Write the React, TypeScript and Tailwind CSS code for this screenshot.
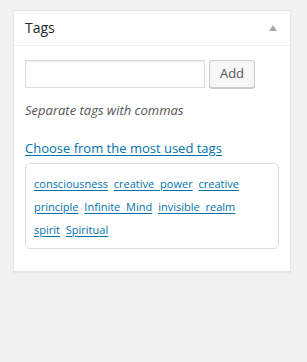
import React from "react";

const tags = [
  "consciousness",
  "creative power",
  "creative principle",
  "Infinite Mind",
  "invisible realm",
  "spirit",
  "Spiritual",
];

export default function App() {
  return (
    <div
      className="min-h-[362px] w-[307px] bg-[#f1f1f1] pt-[10px] pl-[13px]"
      style={{ fontFamily: '"Open Sans", "Noto Sans", sans-serif' }}
    >
      <div className="w-[278px] border border-[#e5e5e5] bg-white shadow-[0_1px_1px_rgba(0,0,0,0.04)]">
        <div className="flex h-[35px] items-center justify-between border-b border-[#eeeeee] pl-[11px] pr-[13px]">
          <span className="text-[14px] leading-none text-[#23282d]">Tags</span>
          <svg width="8" height="6" viewBox="0 0 8 6" className="mb-[1px]">
            <polygon points="4,0 8,6 0,6" fill="#aaaaaa" />
          </svg>
        </div>
        <div className="px-[11px] pt-[14px] pb-[22px]">
          <div className="flex items-center gap-[4px]">
            <div className="h-[28px] w-[180px] border border-[#dddddd] bg-white shadow-[inset_0_1px_2px_rgba(0,0,0,0.07)]" />
            <button className="flex h-[28px] w-[46px] items-center justify-center rounded-[3px] border border-[#cccccc] bg-[#f7f7f7] text-[13px] text-[#555555] shadow-[0_1px_0_#cccccc]">
              Add
            </button>
          </div>
          <p className="mt-[12px] text-[13px] leading-[20px] italic text-[#555555]">
            Separate tags with commas
          </p>
          <a className="mt-[18px] block text-[13px] leading-[20px] text-[#0073aa] underline underline-offset-[2px]">
            Choose from the most used tags
          </a>
          <div className="mt-[5px] rounded-[5px] border border-[#dddddd] pt-[8px] pr-[18px] pb-[7px] pl-[8px] text-[11px] leading-[23px] [word-spacing:3px]">
            {tags.map((t, i) => (
              <React.Fragment key={t}>
                <a className="text-[#0073aa] underline underline-offset-[2px]">{t}</a>
                {i < tags.length - 1 ? " " : null}
              </React.Fragment>
            ))}
          </div>
        </div>
      </div>
    </div>
  );
}
